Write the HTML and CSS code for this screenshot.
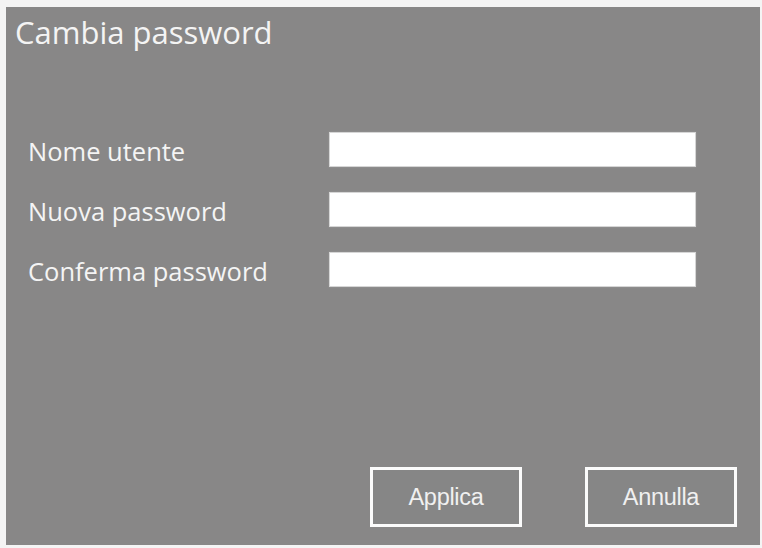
FILE: index.html
```html
<!doctype html>
<html>

	<head>
		<meta charset="utf-8">
		<title>Cambia password</title>
		<link rel="stylesheet" href="styles.css">
	</head>

	<body>
		<!-- finestra per il cambio password -->
		<div class="dialog">
			<h1 class="title">Cambia password</h1>

			<form class="fields">
				<label class="row">
					<span>Nome utente</span>
					<input type="text" />
				</label>
				<label class="row">
					<span>Nuova password</span>
					<input type="password" />
				</label>
				<label class="row">
					<span>Conferma password</span>
					<input type="password" />
				</label>
			</form>

			<div class="actions">
				<button type="button">Applica</button>
				<button type="button">Annulla</button>
			</div>
		</div>
	</body>

</html>
```

FILE: styles.css
```css
body {
	margin: 0;
	padding: 7px 2px 3px 6px;
	background: #f4f4f4;
	font-family: "Open Sans", "Noto Sans", sans-serif;
}

.dialog {
	width: 754px;
	height: 538px;
	background: #888787;
	color: #f4f4f4;
	display: flex;
	flex-direction: column;
	box-sizing: border-box;
	padding: 0 0 18px 0;
}

.title {
	margin: 6px 0 0 9px;
	font-size: 31px;
	font-weight: normal;
	line-height: 38px;
}

.fields {
	margin: 81px 0 0 22px;
	display: flex;
	flex-direction: column;
	gap: 25px;
}

.row {
	display: flex;
	align-items: center;
	height: 35px;
	font-size: 25.5px;
}

.row span {
	width: 301px;
	margin-top: 2px;
}

/* campo bianco con un leggero bordo grigio */
.row input {
	width: 367px;
	height: 35px;
	box-sizing: border-box;
	border: 1px solid #d6d6d6;
	box-shadow: 0 0 2px #9a9a9a;
	background: #fff;
	margin: 0;
	padding: 0;
}

.actions {
	margin-top: auto;
	display: flex;
	gap: 63px;
	padding-left: 364px;
}

.actions button {
	width: 152px;
	height: 60px;
	border: 3px solid #fbfbfb;
	background: #868686;
	color: #f0f0f0;
	font-family: "Liberation Sans", Arial, sans-serif;
	font-size: 23.5px;
	letter-spacing: -0.3px;
	padding: 0;
}
```
